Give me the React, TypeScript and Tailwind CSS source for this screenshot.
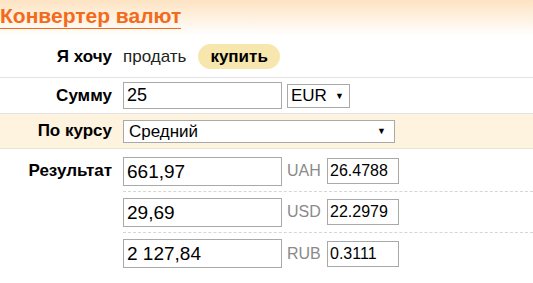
const rates = [
  { value: "661,97", code: "UAH", rate: "26.4788" },
  { value: "29,69", code: "USD", rate: "22.2979" },
  { value: "2 127,84", code: "RUB", rate: "0.3111" },
];

function Label({ children, top }: { children: React.ReactNode; top?: boolean }) {
  return (
    <div
      className={`w-[112px] shrink-0 text-right text-[17px] font-bold text-black ${top ? "self-start pt-[7px]" : ""}`}
    >
      {children}
    </div>
  );
}

export default function App() {
  return (
    <div className="w-[533px] h-[283px] bg-white overflow-hidden font-['Liberation_Sans',Arial,sans-serif] text-black">
      <div className="h-[36px] bg-gradient-to-b from-[#fde3c2] to-white pt-[4px]">
        <h1 className="inline-block text-[21px] leading-[24px] font-bold text-[#f26a1b] border-b border-[#f26a1b]">
          Конвертер валют
        </h1>
      </div>

      <div className="flex items-center gap-[11px] h-[42px] border-b border-[#e3e3e3]">
        <Label>Я хочу</Label>
        <span className="text-[17px] text-[#222]">продать</span>
        <span className="ml-[1px] rounded-full bg-[#f7e6ae] px-[12px] h-[25px] leading-[25px] text-[17px] font-bold">
          купить
        </span>
      </div>

      <div className="flex items-center gap-[11px] h-[36px] border-b border-[#e3e3e3]">
        <Label>Сумму</Label>
        <div className="w-[159px] h-[27px] border border-[#a9a9a9] px-[3px] text-[18px] leading-[25px]">25</div>
        <div className="-ml-[6px] flex items-center w-[63px] h-[24px] border border-[#a9a9a9] pl-[3px] text-[17px] leading-[22px]">
          EUR
          <span className="ml-[8px] text-[9px]">▼</span>
        </div>
      </div>

      <div className="flex items-center gap-[11px] h-[35px] bg-[#fdf3df] border-b border-[#e8e1d4]">
        <Label>По курсу</Label>
        <div className="flex items-center justify-between w-[272px] h-[23px] border border-[#a9a9a9] bg-white pl-[5px] pr-[8px] text-[17px] leading-[21px]">
          Средний
          <span className="text-[9px]">▼</span>
        </div>
      </div>

      <div className="flex gap-[11px] pt-[2px]">
        <Label top>Результат</Label>
        <div className="flex-1">
          {rates.map((r, i) => (
            <div
              key={r.code}
              className={`flex items-center h-[41px] ${i < rates.length - 1 ? "border-b border-dashed border-[#d6d6d6]" : ""}`}
            >
              <div className="w-[159px] h-[29px] border border-[#a9a9a9] px-[3px] text-[19px] leading-[27px]">
                {r.value}
              </div>
              <span className="ml-[5px] w-[36px] text-[16px] text-[#8a8a8a]">{r.code}</span>
              <div className="ml-[4px] w-[72px] h-[26px] border border-[#a9a9a9] px-[2px] text-[16px] leading-[24px]">
                {r.rate}
              </div>
            </div>
          ))}
        </div>
      </div>
    </div>
  );
}
